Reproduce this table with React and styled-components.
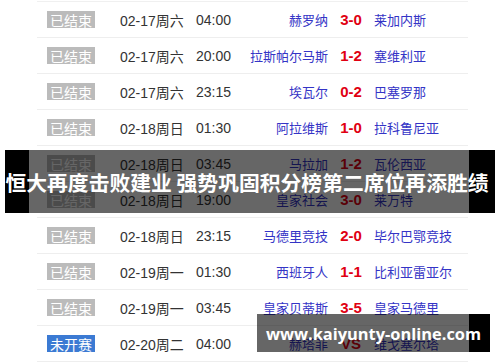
import styled, { createGlobalStyle } from "styled-components";

const matches = [
	{ state: "done", date: "02-17周六", time: "04:00", home: "赫罗纳", score: "3-0", away: "莱加内斯" },
	{ state: "done", date: "02-17周六", time: "20:00", home: "拉斯帕尔马斯", score: "1-2", away: "塞维利亚" },
	{ state: "done", date: "02-17周六", time: "23:15", home: "埃瓦尔", score: "0-2", away: "巴塞罗那" },
	{ state: "done", date: "02-18周日", time: "01:30", home: "阿拉维斯", score: "1-0", away: "拉科鲁尼亚" },
	{ state: "done", date: "02-18周日", time: "03:45", home: "马拉加", score: "1-2", away: "瓦伦西亚" },
	{ state: "done", date: "02-18周日", time: "19:00", home: "皇家社会", score: "3-0", away: "莱万特" },
	{ state: "done", date: "02-18周日", time: "23:15", home: "马德里竞技", score: "2-0", away: "毕尔巴鄂竞技" },
	{ state: "done", date: "02-19周一", time: "01:30", home: "西班牙人", score: "1-1", away: "比利亚雷亚尔" },
	{ state: "done", date: "02-19周一", time: "03:45", home: "皇家贝蒂斯", score: "3-5", away: "皇家马德里" },
	{ state: "soon", date: "02-20周二", time: "04:00", home: "赫塔菲", score: "VS", away: "维戈塞尔塔" },
];

export default function App() {
	return (
		<>
			<GlobalStyle />
			<Page>
				<Table>
					{matches.map((m, i) => (
						<Row key={i}>
							<StatusCell>
								<Badge $soon={m.state === "soon"}>{m.state === "soon" ? "未开赛" : "已结束"}</Badge>
							</StatusCell>
							<DateCell>{m.date}</DateCell>
							<TimeCell>{m.time}</TimeCell>
							<Home>{m.home}</Home>
							<Score>{m.score}</Score>
							<Away>{m.away}</Away>
						</Row>
					))}
				</Table>
				<TitleBar>
					<TitleText>恒大再度击败建业 强势巩固积分榜第二席位再添胜绩</TitleText>
				</TitleBar>
				<SiteBar>
					<SiteText>www.kaiyunty-online.com</SiteText>
				</SiteBar>
			</Page>
		</>
	);
}

const GlobalStyle = createGlobalStyle`
	body {
		margin: 0;
		background: #fff;
		font-family: "Liberation Sans", "Noto Sans CJK SC", sans-serif;
	}
`;

const Page = styled.div`
	position: relative;
	width: 500px;
	height: 362px;
	overflow: hidden;
	background: #fff;
`;

const Table = styled.div`
	margin: 1px 0 0 37px;
	width: 431px;
	border-top: 1px solid #f0f0f0;
`;

const Row = styled.div`
	display: grid;
	grid-template-columns: 83px 76px 52px 80px 46px 1fr;
	align-items: center;
	height: 35px;
	border-bottom: 1px solid #eeeeee;
	font-size: 14px;
	color: #333;
`;

const StatusCell = styled.div`
	padding-left: 10px;
	display: flex;
`;

const Badge = styled.span`
	display: inline-flex;
	align-items: center;
	justify-content: center;
	width: 48px;
	height: 17px;
	font-size: 14px;
	line-height: 1;
	color: #fff;
	background: ${(p) => (p.$soon ? "#3b7ad3" : "#bbbbbb")};
	font-family: "Noto Sans CJK SC", sans-serif;
`;

const DateCell = styled.div`
	white-space: nowrap;
`;

const TimeCell = styled.div``;

const Home = styled.div`
	text-align: right;
	font-size: 13px;
	color: #3434c6;
	white-space: nowrap;
`;

const Score = styled.div`
	text-align: center;
	font-size: 15px;
	font-weight: bold;
	color: #e00012;
`;

const Away = styled.div`
	font-size: 13px;
	color: #3434c6;
	white-space: nowrap;
`;

const TitleBar = styled.div`
	position: absolute;
	left: 5px;
	top: 150px;
	width: 490px;
	height: 63px;
	display: flex;
	align-items: center;
	justify-content: center;
	background: linear-gradient(
		to right,
		#000 0 24px,
		rgba(0, 0, 0, 0.6) 24px 464px,
		#000 464px
	);
`;

const TitleText = styled.div`
	white-space: nowrap;
	margin-left: -6px;
	font-family: "Noto Sans CJK SC", sans-serif;
	font-size: 20.8px;
	font-weight: bold;
	color: #fff;
`;

const SiteBar = styled.div`
	position: absolute;
	left: 257px;
	top: 314px;
	width: 233px;
	height: 38px;
	display: flex;
	align-items: center;
	justify-content: center;
	background: linear-gradient(to right, rgba(0, 0, 0, 0.6) 0 212px, #000 212px);
`;

const SiteText = styled.div`
	white-space: nowrap;
	font-family: "Open Sans", sans-serif;
	font-size: 16.4px;
	font-weight: bold;
	color: #fff;
`;
